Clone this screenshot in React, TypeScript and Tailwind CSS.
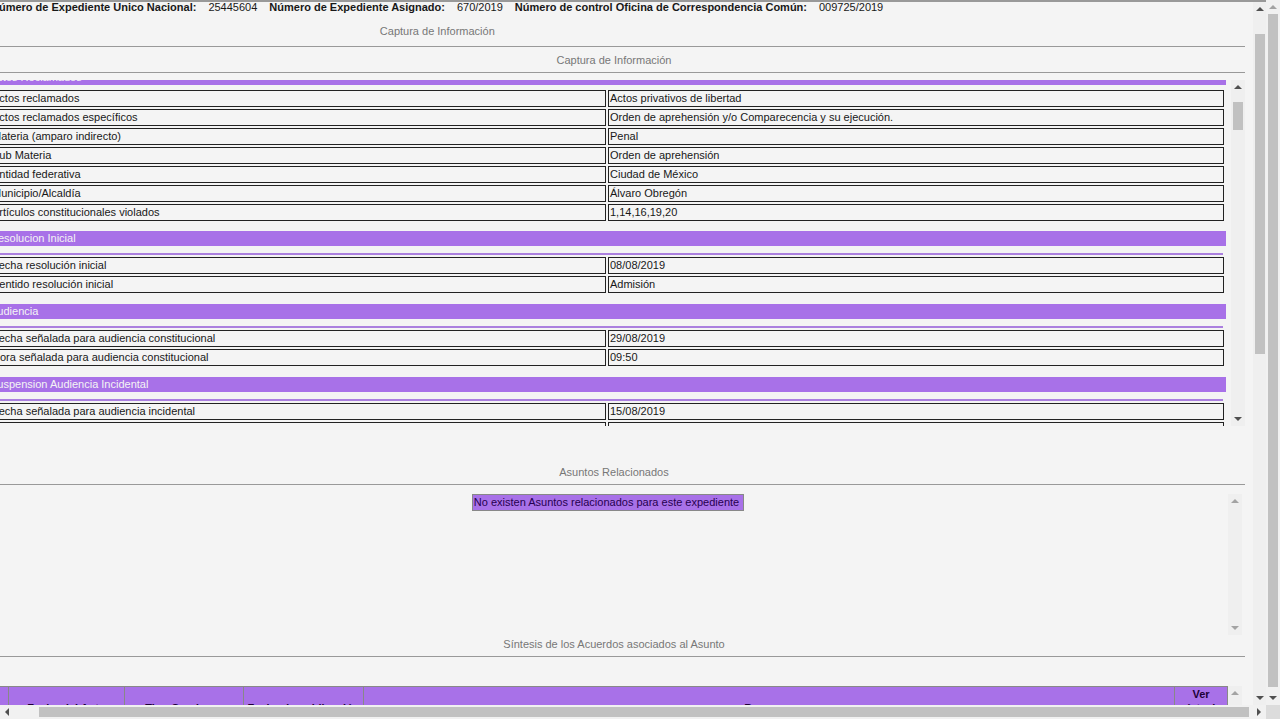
import clsx from "clsx"

type Direction = "up" | "down" | "left" | "right"

const sections = [
  {
    title: "Actos Reclamados",
    divider: false,
    rows: [
      ["Actos reclamados", "Actos privativos de libertad"],
      ["Actos reclamados específicos", "Orden de aprehensión y/o Comparecencia y su ejecución."],
      ["Materia (amparo indirecto)", "Penal"],
      ["Sub Materia", "Orden de aprehensión"],
      ["Entidad federativa", "Ciudad de México"],
      ["Municipio/Alcaldía", "Álvaro Obregón"],
      ["Artículos constitucionales violados", "1,14,16,19,20"],
    ],
  },
  {
    title: "Resolucion Inicial",
    divider: true,
    rows: [
      ["Fecha resolución inicial", "08/08/2019"],
      ["Sentido resolución inicial", "Admisión"],
    ],
  },
  {
    title: "Audiencia",
    divider: true,
    rows: [
      ["Fecha señalada para audiencia constitucional", "29/08/2019"],
      ["Hora señalada para audiencia constitucional", "09:50"],
    ],
  },
  {
    title: "Suspension Audiencia Incidental",
    divider: true,
    rows: [
      ["Fecha señalada para audiencia incidental", "15/08/2019"],
      ["Hora señalada para audiencia incidental", "09:40"],
    ],
  },
]

const identifiers = [
  { label: "Número de Expediente Unico Nacional:", value: "25445604" },
  { label: "Número de Expediente Asignado:", value: "670/2019" },
  { label: "Número de control Oficina de Correspondencia Común:", value: "009725/2019" },
]

const arrows: Record<Direction, string> = {
  up: "M3 9h8L7 5z",
  down: "M3 5h8L7 9z",
  left: "M9 3v8L5 7z",
  right: "M5 3v8l4-4z",
}

const labels: Record<Direction, string> = {
  up: "Subir",
  down: "Bajar",
  left: "Izquierda",
  right: "Derecha",
}

function ScrollArrow({ direction, disabled }: { direction: Direction; disabled?: boolean }) {
  return (
    <button
      type="button"
      disabled={disabled}
      aria-label={labels[direction]}
      className={clsx("block size-3.5 shrink-0", disabled ? "text-[#a3a3a3]" : "text-[#505050]")}
    >
      <svg viewBox="0 0 14 14" className="size-3.5" fill="currentColor">
        <path d={arrows[direction]} />
      </svg>
    </button>
  )
}

function Heading({ children, className }: { children: string; className?: string }) {
  return (
    <h2 className={clsx("border-b border-[#999] pb-1 text-center leading-4 text-[#777]", className)}>
      {children}
    </h2>
  )
}

function CaseSection({ title, divider, rows }: (typeof sections)[number]) {
  return (
    <section className={divider ? "mb-[9px]" : "mb-2"}>
      <h3 className="bg-[#a871e8] pl-[2px] leading-[15px] text-[#f4f4f4]">{title}</h3>
      {divider && <hr className="mt-[7px] mr-[3px] border-t-2 border-[#ab80df]" />}
      <table
        className={clsx(
          "w-full table-fixed border-separate border-spacing-[2px] leading-[15px]",
          !divider && "mt-[3px]",
        )}
      >
        <tbody>
          {rows.map(([name, value]) => (
            <tr key={name}>
              <th scope="row" className="border border-[#222] px-px text-left font-normal">
                {name}
              </th>
              <td className="border border-[#222] px-px">{value}</td>
            </tr>
          ))}
        </tbody>
      </table>
    </section>
  )
}

export default function App() {
  return (
    <div className="flex h-screen flex-col overflow-hidden bg-[#f4f4f4] font-['Liberation_Sans',Arial,sans-serif] text-[11px] text-[#181818]">
      <div className="flex min-h-0 flex-1">
        <div className="flex min-w-0 flex-1 border-t-2 border-[#999]">
          <main className="min-w-0 flex-1 overflow-hidden">
            <div className="-mt-px mr-2 -ml-[17px]">
              {/* Case identifiers */}
              <dl className="flex gap-3 pl-2 leading-3 whitespace-nowrap">
                {identifiers.map(({ label, value }) => (
                  <div key={label} className="flex gap-3">
                    <dt className="font-bold">{label}</dt>
                    <dd>{value}</dd>
                  </div>
                ))}
              </dl>

              <div className="border-b border-[#999] pt-2.5 pb-[7px]">
                <h1 className="w-[72%] text-center leading-4 text-[#777]">Captura de Información</h1>
              </div>

              {/* Captured data */}
              <Heading className="mt-[5px]">Captura de Información</Heading>
              <div className="mt-[7px] flex h-[346px] overflow-hidden pl-[5px]">
                <div className="-mt-2.5 min-w-0 flex-1 pr-[5px]">
                  {sections.map((section) => (
                    <CaseSection key={section.title} {...section} />
                  ))}
                </div>
                <div className="flex w-3.5 flex-col bg-[#efefef]">
                  <ScrollArrow direction="up" />
                  <div className="mx-[2px] mt-2 h-7 bg-[#c1c1c1]" />
                  <div className="flex-1" />
                  <ScrollArrow direction="down" />
                </div>
              </div>

              {/* Related cases */}
              <Heading className="mt-[38px]">Asuntos Relacionados</Heading>
              <div className="mt-[9px] mr-[3px] flex h-[141px] pl-[5px]">
                <div className="flex-1">
                  <p className="mx-auto w-fit border border-[#888] bg-[#a871e8] pr-1 pl-px leading-[15px] text-[#260050]">
                    No existen Asuntos relacionados para este expediente
                  </p>
                </div>
                <div className="flex w-3.5 flex-col justify-between bg-[#efefef]">
                  <ScrollArrow direction="up" disabled />
                  <ScrollArrow direction="down" disabled />
                </div>
              </div>

              {/* Agreements */}
              <Heading className="mt-px">Síntesis de los Acuerdos asociados al Asunto</Heading>
              <div className="mt-[29px] mr-[3px] flex">
                <table className="min-w-0 flex-1 table-fixed border-collapse bg-[#a871e8] leading-[14px] text-[#200038]">
                  <thead>
                    <tr className="whitespace-nowrap">
                      <th scope="col" className="w-[25px] border border-[#888]">
                        No
                      </th>
                      <th scope="col" className="w-[116px] border border-[#888]">
                        Fecha del Auto
                      </th>
                      <th scope="col" className="w-[119px] border border-[#888]">
                        Tipo Cuaderno
                      </th>
                      <th scope="col" className="w-[120px] border border-[#888]">
                        Fecha de publicación
                      </th>
                      <th scope="col" className="border border-[#888]">
                        Resumen
                      </th>
                      <th scope="col" className="w-[53px] border border-[#888] whitespace-normal">
                        Ver síntesis del auto
                      </th>
                    </tr>
                  </thead>
                </table>
                <div className="w-3.5 bg-[#efefef]">
                  <ScrollArrow direction="up" disabled />
                </div>
              </div>
            </div>
          </main>

          <div className="flex w-[13px] flex-col items-center bg-[#efefef]">
            <ScrollArrow direction="up" />
            <div className="grow-[18]" />
            <div className="w-2.5 grow-[320] bg-[#c1c1c1]" />
            <div className="grow-[337]" />
            <ScrollArrow direction="down" />
          </div>
        </div>

        <div className="flex w-3.5 flex-col items-center bg-[#f1f1f1]">
          <ScrollArrow direction="up" disabled />
          <div className="mb-1 w-2.5 flex-1 bg-[#c1c1c1]" />
          <ScrollArrow direction="down" />
        </div>
      </div>

      <div className="flex h-3.5 shrink-0">
        <div className="flex flex-1 items-center bg-[#f1f1f1]">
          <ScrollArrow direction="left" />
          <div className="mr-[3px] ml-[25px] h-2.5 flex-1 bg-[#c1c1c1]" />
          <ScrollArrow direction="right" />
        </div>
        <div className="w-3.5 bg-[#dcdcdc]" />
      </div>
    </div>
  )
}
